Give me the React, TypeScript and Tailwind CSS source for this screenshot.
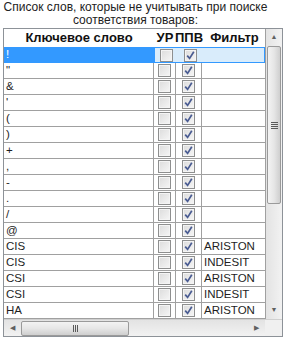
import React from 'react';

type Row = { word: string; ur: boolean; ppv: boolean; filter: string };

const rows: Row[] = [
  { word: '!', ur: false, ppv: true, filter: '' },
  { word: '"', ur: false, ppv: true, filter: '' },
  { word: '&', ur: false, ppv: true, filter: '' },
  { word: "'", ur: false, ppv: true, filter: '' },
  { word: '(', ur: false, ppv: true, filter: '' },
  { word: ')', ur: false, ppv: true, filter: '' },
  { word: '+', ur: false, ppv: true, filter: '' },
  { word: ',', ur: false, ppv: true, filter: '' },
  { word: '-', ur: false, ppv: true, filter: '' },
  { word: '.', ur: false, ppv: true, filter: '' },
  { word: '/', ur: false, ppv: true, filter: '' },
  { word: '@', ur: false, ppv: true, filter: '' },
  { word: 'CIS', ur: false, ppv: true, filter: 'ARISTON' },
  { word: 'CIS', ur: false, ppv: true, filter: 'INDESIT' },
  { word: 'CSI', ur: false, ppv: true, filter: 'ARISTON' },
  { word: 'CSI', ur: false, ppv: true, filter: 'INDESIT' },
  { word: 'HA', ur: false, ppv: true, filter: 'ARISTON' },
];

function CheckBox({ checked }: { checked: boolean }) {
  return (
    <div className="flex h-[13px] w-[13px] items-center justify-center border border-[#8e8f8f] bg-gradient-to-br from-[#dcdcdc] to-[#f6f6f6]">
      <div className="flex h-[11px] w-[11px] items-center justify-center border border-[#f4f4f4]">
        {checked && (
          <svg width="9" height="9" viewBox="0 0 9 9">
            <path d="M1.2 4.6 L3.6 7.4 L7.8 0.8" fill="none" stroke="#4a5c92" strokeWidth="1.7" />
          </svg>
        )}
      </div>
    </div>
  );
}

function Grip({ vertical }: { vertical: boolean }) {
  return vertical ? (
    <div className="flex flex-col gap-[1px]">
      <div className="h-[1px] w-[7px] bg-[#5a5a5a]" />
      <div className="h-[1px] w-[7px] bg-[#5a5a5a]" />
      <div className="h-[1px] w-[7px] bg-[#5a5a5a]" />
      <div className="h-[1px] w-[7px] bg-[#5a5a5a]" />
    </div>
  ) : (
    <div className="flex gap-[1px]">
      <div className="h-[7px] w-[1px] bg-[#5a5a5a]" />
      <div className="h-[7px] w-[1px] bg-[#5a5a5a]" />
      <div className="h-[7px] w-[1px] bg-[#5a5a5a]" />
    </div>
  );
}

export default function App() {
  return (
    <div className="h-[339px] w-[284px] bg-white font-['Liberation_Sans',sans-serif] text-[12px] text-[#1e1e1e]">
      <div className="flex h-[28px] flex-col items-center pt-[1px] pr-[13px] leading-[13px] text-[#222]">
        <span>Список слов, которые не учитывать при поиске</span>
        <span>соответствия товаров:</span>
      </div>

      <div className="ml-[3px] flex w-[280px] flex-col border border-[#8d9298]">
        <div className="flex">
          <div className="h-[290px] w-[261px] overflow-hidden">
            <div className="flex h-[18px] text-[13px] font-bold text-[#111]">
              <div className="flex w-[150px] items-center justify-center">Ключевое слово</div>
              <div className="flex w-[22px] items-center justify-center">УР</div>
              <div className="flex w-[26px] items-center justify-center">ППВ</div>
              <div className="flex w-[63px] items-center justify-center pl-[2px]">Фильтр</div>
            </div>
            {rows.map((r, i) => {
              const sel = i === 0;
              return (
                <div key={i} className={`flex h-[16px] text-[11.5px] ${sel ? '' : 'border-b border-[#a0a0a0]'}`}>
                  <div className={`flex w-[150px] items-center pl-[2px] ${sel ? 'bg-[#3399ff] text-white' : 'border-r border-[#a0a0a0]'}`}>
                    {r.word}
                  </div>
                  <div className={`flex flex-1 ${sel ? 'border border-[#3399ff] bg-[#d9ecfb]' : ''}`}>
                    <div className={`flex w-[22px] items-center justify-center ${sel ? 'w-[21px]' : 'border-r border-[#a0a0a0]'}`}>
                      <CheckBox checked={r.ur} />
                    </div>
                    <div className={`flex w-[26px] items-center justify-center ${sel ? '' : 'border-r border-[#a0a0a0]'}`}>
                      <CheckBox checked={r.ppv} />
                    </div>
                    <div className="flex flex-1 items-center pl-[2px]">{r.filter}</div>
                  </div>
                </div>
              );
            })}
          </div>

          <div className="flex h-[290px] w-[17px] flex-col border-l border-[#a0a0a0] bg-gradient-to-r from-[#e3e3e3] to-[#f2f2f2]">
            <div className="flex h-[17px] items-center justify-center text-[7px] text-[#606060]">▲</div>
            <div className="mx-[1px] flex h-[158px] items-center justify-center rounded-[2px] border border-[#9a9a9a] bg-gradient-to-r from-[#f3f3f3] via-[#e6e6e6] to-[#cfcfcf]">
              <Grip vertical />
            </div>
            <div className="flex-1" />
            <div className="flex h-[17px] items-center justify-center text-[7px] text-[#606060]">▼</div>
          </div>
        </div>

        <div className="flex h-[17px] border-t border-[#d0d0d0]">
          <div className="flex w-[261px] items-center bg-gradient-to-b from-[#e3e3e3] to-[#f2f2f2]">
            <div className="flex w-[17px] items-center justify-center text-[7px] text-[#606060]">◀</div>
            <div className="flex h-[15px] w-[108px] items-center justify-center rounded-[2px] border border-[#9a9a9a] bg-gradient-to-b from-[#f3f3f3] via-[#e6e6e6] to-[#cfcfcf]">
              <Grip vertical={false} />
            </div>
            <div className="flex-1" />
            <div className="flex w-[17px] items-center justify-center text-[7px] text-[#606060]">▶</div>
          </div>
          <div className="flex-1 bg-[#f0f0f0]" />
        </div>
      </div>
    </div>
  );
}
